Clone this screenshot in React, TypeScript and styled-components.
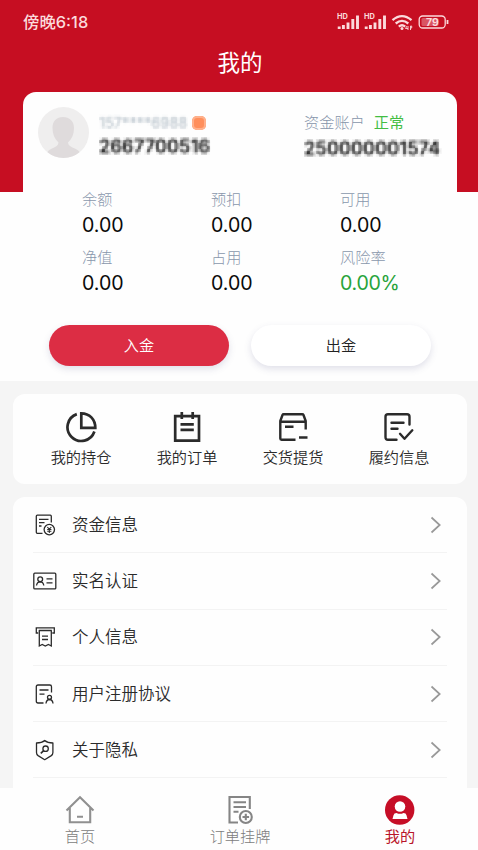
import React from 'react';
import styled, { createGlobalStyle, css } from 'styled-components';

const GlobalStyle = createGlobalStyle`
  * { box-sizing: border-box; }
  body {
    margin: 0;
    background: #fff;
    font-family: Inter, 'Noto Sans CJK SC', sans-serif;
    color: #333;
    overflow: hidden;
  }
`;

const Page = styled.div`
  width: 478px;
  height: 850px;
  display: flex;
  flex-direction: column;
  overflow: hidden;
  background: #f5f5f5;
`;

const Top = styled.section`
  height: 381px;
  flex: none;
  background: linear-gradient(#c60e22 192px, #fefefe 192px);
`;

const StatusBar = styled.div`
  height: 44px;
  padding: 0 28px 0 23px;
  display: flex;
  align-items: center;
  justify-content: space-between;
  color: #fbdadc;
`;

const Clock = styled.span`
  font-size: 16.4px;
  font-weight: 500;
  line-height: 20px;
`;

const Title = styled.h1`
  margin: 0;
  height: 48px;
  padding: 7px 0 0 2px;
  font-size: 22.5px;
  line-height: 24px;
  font-weight: 400;
  text-align: center;
  color: #fff;
`;

const Account = styled.div`
  margin: 0 21px 0 23px;
  height: 289px;
  border-radius: 13px 13px 0 0;
  background: #fefefe;
  display: flex;
  flex-direction: column;
`;

const Profile = styled.div`
  height: 98px;
  padding: 15px 10px 0 15px;
  display: flex;
`;

const Identity = styled.div`
  margin: 5px 0 0 10px;
  width: 205px;
`;

const Funds = styled.div`
  margin: 5px 0 0;
`;

const Line = styled.div<{ $gap?: number }>`
  height: ${p => (p.$gap ? 24 : 22)}px;
  padding-bottom: ${p => (p.$gap ? 3 : 1)}px;
  line-height: 20px;
  font-size: 15.2px;
  font-weight: 300;
  color: #8795aa;
  display: flex;
  align-items: center;
  gap: ${p => p.$gap ?? 6}px;
`;

const Status = styled.span`
  font-weight: 400;
  color: #43bd43;
`;

const Masked = styled.span<{ $faint?: boolean; $width: number }>`
  display: block;
  width: ${p => p.$width}px;
  white-space: nowrap;
  line-height: 24px;
  filter: url(#mosaic);
  ${p => p.$faint
    ? css`font-size: 14.6px; font-weight: 400; color: #b4bfc8;`
    : css`font-size: 18.3px; font-weight: 600; color: #222;`}
`;

const Dot = styled.i`
  width: 14px;
  height: 14px;
  border-radius: 5px;
  background: #ff8f5c;
  box-shadow: inset 0 0 0 2px #ffb18c;
`;

const Balances = styled.div`
  display: grid;
  grid-template-columns: repeat(3, 129px);
  grid-auto-rows: 57.5px;
  padding-left: 59px;
`;

const BalanceLabel = styled.div`
  font-size: 15.2px;
  line-height: 20px;
  font-weight: 300;
  color: #8997ac;
`;

const BalanceValue = styled.div<{ $positive?: boolean }>`
  margin-top: 3px;
  font-size: 19.6px;
  line-height: 24px;
  letter-spacing: ${p => (p.$positive ? '-0.3px' : '0')};
  color: ${p => (p.$positive ? '#27a33a' : '#0a0a0a')};
`;

const Actions = styled.div`
  display: flex;
  gap: 22px;
  padding: 20px 26px 0;
`;

const Pill = styled.button<{ $primary?: boolean }>`
  width: 180px;
  height: 41px;
  padding: 0;
  border: 0;
  border-radius: 21px;
  font: 350 15.2px/40px Inter, 'Noto Sans CJK SC', sans-serif;
  color: ${p => (p.$primary ? '#fff' : '#222')};
  background: ${p => (p.$primary ? '#dc2d44' : '#fff')};
  box-shadow: 0 3px 7px rgba(75, 80, 130, 0.17);
`;

const Shortcuts = styled.nav`
  flex: none;
  margin: 13px 11px 0 13px;
  height: 90px;
  padding: 17px 15px 0;
  border-radius: 12px;
  background: #fefefe;
  display: grid;
  grid-template-columns: repeat(4, 106px);
`;

const Shortcut = styled.div`
  display: flex;
  flex-direction: column;
  align-items: center;
  gap: 5px;
  font-size: 15.2px;
  line-height: 20px;
  font-weight: 350;
  color: #2b2b2b;
`;

const Menu = styled.div`
  flex: 1;
  min-height: 0;
  overflow: hidden;
  margin: 13px 11px 0 13px;
  padding: 0 20px;
  border-radius: 12px 12px 0 0;
  background: #fefefe;
`;

const MenuRow = styled.div`
  height: 56.3px;
  border-bottom: 1px solid #f3f3f3;
  display: flex;
  align-items: center;
  gap: 15px;
  padding-right: 5px;
  font-size: 16.5px;
  line-height: 20px;
  font-weight: 350;
  color: #2b2b2b;
`;

const MenuText = styled.span`
  flex: 1;
`;

const TabBar = styled.nav`
  flex: none;
  height: 62px;
  background: #fefefe;
  display: grid;
  grid-template-columns: repeat(3, 160px);
  overflow: hidden;
`;

const Tab = styled.div<{ $active?: boolean }>`
  display: flex;
  flex-direction: column;
  align-items: center;
  gap: 2px;
  padding-top: 7px;
  font-size: 15.2px;
  line-height: 20px;
  font-weight: ${p => (p.$active ? 400 : 300)};
  color: ${p => (p.$active ? '#b9152a' : '#7c7c7c')};
`;

const Icon = styled.svg`
  display: block;
  flex: none;
  fill: none;
  stroke: currentColor;
`;

const Filters = styled.svg`
  position: absolute;
  width: 0;
  height: 0;
`;

const ChevronIcon = styled(Icon)`
  color: #999;
`;

const StatusIcons = () => (
  <Icon width="113" height="18" viewBox="0 0 113 18">
    {[0, 27].map(x => (
      <g key={x} transform={`translate(${x} 0)`}>
        <path d="M2.200 16v-2.600M6.400 16v-4M11 16V9.500M15.800 16V6M20.500 16V2.500" strokeWidth="2.900" />
        <text x="0" y="6.300" fontSize="7.400" fontWeight="700" fill="currentColor" stroke="none">HD</text>
      </g>
    ))}
    <path d="M55.500 7.200Q65 -1 74.500 7.200M58.700 10.500Q65 5.200 71.300 10.500M61.800 13.600Q65 11 68.200 13.600" strokeWidth="2.300" />
    <circle cx="65" cy="15.500" r="1.500" fill="currentColor" stroke="none" />
    <path d="M70 13l-1.500 2.500h2.500M71 13v4M73.500 17v-4h1.200v2h-1" strokeWidth=".9" />
    <rect x="82.200" y="3" width="26" height="12" rx="3.500" strokeWidth="1.300" />
    <rect x="84.500" y="5" width="17" height="8" rx="1.500" fill="currentColor" opacity=".35" stroke="none" />
    <path d="M110.500 7v4" strokeWidth="1.800" />
    <text x="95.500" y="13" textAnchor="middle" fontSize="10.500" fontWeight="700" fill="currentColor" stroke="none">79</text>
  </Icon>
);

const Avatar = () => (
  <Icon width="51" height="51" viewBox="0 0 51 51">
    <g stroke="none">
      <circle cx="25.500" cy="25.500" r="25.500" fill="#efeeee" />
      <path d="M9.500 45.300C12 40 20 41.500 20.500 35.500C16.500 32 14.500 27 14.500 21C14.500 14 18.500 10 25 10S36 14 36 21C36 27 34 32 30 35.500C30.500 41.500 39 40 41.500 45.300A25.500 25.500 0 0 1 9.500 45.300Z" fill="#dfdbdc" />
    </g>
  </Icon>
);

const PieIcon = () => (
  <Icon width="32" height="32" viewBox="0 0 32 32" strokeWidth="2.700">
    <path d="M11.800 3.100A13.800 13.800 0 1 0 29.400 20.500" />
    <path d="M16.300 2.300V16.800H30.300C30.300 8.500 24.500 2.300 16.300 2.300Z" />
  </Icon>
);

const OrderIcon = () => (
  <Icon width="32" height="32" viewBox="0 0 32 32" strokeWidth="2.700">
    <path d="M4.200 5.200H28V29.700H4.200ZM10.800 1V8M21.700 1V8M9.500 13.300H22.800M9.500 18.800H22.800" />
  </Icon>
);

const BoxIcon = () => (
  <Icon width="32" height="32" viewBox="0 0 32 32" strokeWidth="2.400" strokeLinejoin="round">
    <path d="M18.500 28.700H4.500Q3.300 28.700 3.300 27.500V10L5.500 4Q5.800 3.300 6.600 3.300H25.200Q26.200 3.300 26.500 4L28.700 10V18.500M3.300 10.700H28.700M8 15.700H16.500M22 26.500H30.500" />
  </Icon>
);

const ContractIcon = () => (
  <Icon width="32" height="32" viewBox="0 0 32 32" strokeWidth="2.400" strokeLinecap="round" strokeLinejoin="round">
    <path d="M13.500 28.700H5Q2.500 28.700 2.500 26V5.800Q2.500 3.300 5 3.300H24Q26.500 3.300 26.500 5.800V13.500M8.500 11.800H20.500M8.500 17.800H14.500M17 22.800L21.500 27.800L29.300 19.300" />
  </Icon>
);

const FundIcon = () => (
  <Icon width="24" height="24" viewBox="0 0 24 24" strokeWidth="1.300">
    <path d="M9.500 20.300H4.300Q3.300 20.300 3.300 19.300V3.200Q3.300 2.200 4.300 2.200H17.300Q18.300 2.200 18.300 3.200V9.500M6 6.400H15.500M6 9.700H11.500M6 13H8.500" />
    <circle cx="16.300" cy="16.600" r="5.200" />
    <path d="M14.300 14L16.300 16.200L18.300 14M14.200 16.500H18.400M14.200 18.200H18.400M16.300 16V20" strokeWidth="1.100" />
  </Icon>
);

const IdIcon = () => (
  <Icon width="24" height="24" viewBox="0 0 24 24" strokeWidth="1.300">
    <rect x=".8" y="4.200" width="22" height="15.700" rx="1" />
    <circle cx="7.200" cy="10.300" r="2.400" />
    <path d="M3.500 16.500Q4 13 7.200 12.900Q10.300 13 10.800 16.500M13.500 9.900H19.500M13.500 13.800H19.500" />
  </Icon>
);

const PersonalIcon = () => (
  <Icon width="24" height="24" viewBox="0 0 24 24" strokeWidth="1.300">
    <path d="M5.300 8H3.300V2.800H21.300V8H19.300M5.800 5.500H18.800" />
    <path d="M6.300 5.500V21L9.200 19.500L12.300 21L15.400 19.500L18.300 21V5.500M9 11.200H15M9 14.500H15" />
  </Icon>
);

const AgreementIcon = () => (
  <Icon width="24" height="24" viewBox="0 0 24 24" strokeWidth="1.300">
    <path d="M10.500 21H5Q3.300 21 3.300 19.300V4.700Q3.300 3 5 3H16.800Q18.500 3 18.500 4.700V10.500M6.500 8H15.500M6.500 12.200H11.500" />
    <circle cx="16.500" cy="15.300" r="2" />
    <path d="M13 21.500Q13.300 17.600 16.500 17.500Q19.700 17.600 20 21.500" />
  </Icon>
);

const PrivacyIcon = () => (
  <Icon width="24" height="24" viewBox="0 0 24 24" strokeWidth="1.300" strokeLinejoin="round">
    <path d="M11.700 2.500Q14.500 5 19.900 5V14.500Q19.900 16.500 18.300 17.600L11.700 21.700L5.100 17.600Q3.500 16.500 3.500 14.500V5Q8.900 5 11.700 2.500Z" />
    <circle cx="12.600" cy="10.700" r="2.700" />
    <path d="M10.700 12.600L7.800 15.400" strokeWidth="1.600" />
  </Icon>
);

const Chevron = () => (
  <ChevronIcon width="12" height="18" viewBox="0 0 12 18" strokeWidth="1.700">
    <path d="M1.500 1.500L9.700 9L1.500 16.500" />
  </ChevronIcon>
);

const HomeIcon = () => (
  <Icon width="30" height="30" viewBox="0 0 30 30" strokeWidth="2.100">
    <path d="M1.500 15.500L15 2.300L28.500 15.500M4.800 13V27.200H25.200V13M12 21.800H18" stroke="#909090" />
  </Icon>
);

const ListingIcon = () => (
  <Icon width="30" height="30" viewBox="0 0 30 30" strokeWidth="2.100">
    <g stroke="#858585">
      <path d="M13 27.500H4.500V2H24.800V14M8.500 7.300H21M8.500 12H21M8.500 16.700H13.500" />
      <circle cx="20.800" cy="22" r="6" />
      <path d="M17.500 22H24.100M20.800 18.700V25.300" />
    </g>
  </Icon>
);

const MineIcon = () => (
  <Icon width="30" height="30" viewBox="0 0 30 30">
    <g stroke="none">
      <circle cx="14.700" cy="15" r="14.700" fill="#c60e27" />
      <circle cx="15" cy="11.500" r="5.300" fill="#fff" />
      <path d="M7.500 24L8.500 20.300Q9 18 11.500 18Q15 19.700 18.500 18Q21 18 21.500 20.300L22.500 24Z" fill="#fff" />
    </g>
  </Icon>
);

/* Samples one pixel per 3px cell and grows it to fill the cell, laid over a soft copy of the digits. */
const MosaicFilter = () => (
  <Filters>
    <filter id="mosaic" x="0" y="0" width="1" height="1" colorInterpolationFilters="sRGB">
      <feGaussianBlur in="SourceGraphic" stdDeviation=".8" result="soft" />
      <feFlood x="1" y="1" width="1" height="1" floodColor="#000" result="point" />
      <feOffset in="point" x="0" y="0" width="3" height="3" dx="0" dy="0" />
      <feTile result="points" />
      <feComposite in="soft" in2="points" operator="in" />
      <feMorphology operator="dilate" radius="1" result="cells" />
      <feComposite in="cells" in2="soft" operator="arithmetic" k1="0" k2=".62" k3=".48" k4="0" />
    </filter>
  </Filters>
);

const balances = [
  ['余额', '0.00'], ['预扣', '0.00'], ['可用', '0.00'],
  ['净值', '0.00'], ['占用', '0.00'], ['风险率', '0.00%'],
];

const shortcuts = [
  { label: '我的持仓', Glyph: PieIcon },
  { label: '我的订单', Glyph: OrderIcon },
  { label: '交货提货', Glyph: BoxIcon },
  { label: '履约信息', Glyph: ContractIcon },
];

const menu = [
  { label: '资金信息', Glyph: FundIcon },
  { label: '实名认证', Glyph: IdIcon },
  { label: '个人信息', Glyph: PersonalIcon },
  { label: '用户注册协议', Glyph: AgreementIcon },
  { label: '关于隐私', Glyph: PrivacyIcon },
];

export default function App() {
  return (
    <Page>
      <GlobalStyle />
      <MosaicFilter />
      <Top>
        <StatusBar>
          <Clock>傍晚6:18</Clock>
          <StatusIcons />
        </StatusBar>
        <Title>我的</Title>
        <Account>
          <Profile>
            <Avatar />
            <Identity>
              <Line>
                <Masked $faint $width={87}>157****6988</Masked>
                <Dot />
              </Line>
              <Masked $width={114}>2667700516</Masked>
            </Identity>
            <Funds>
              <Line $gap={9}>资金账户<Status>正常</Status></Line>
              <Masked $width={142}>250000001574</Masked>
            </Funds>
          </Profile>
          <Balances>
            {balances.map(([label, value]) => (
              <div key={label}>
                <BalanceLabel>{label}</BalanceLabel>
                <BalanceValue $positive={value.endsWith('%')}>{value}</BalanceValue>
              </div>
            ))}
          </Balances>
          <Actions>
            <Pill $primary>入金</Pill>
            <Pill>出金</Pill>
          </Actions>
        </Account>
      </Top>
      <Shortcuts>
        {shortcuts.map(({ label, Glyph }) => (
          <Shortcut key={label}><Glyph />{label}</Shortcut>
        ))}
      </Shortcuts>
      <Menu>
        {menu.map(({ label, Glyph }) => (
          <MenuRow key={label}><Glyph /><MenuText>{label}</MenuText><Chevron /></MenuRow>
        ))}
      </Menu>
      <TabBar>
        <Tab><HomeIcon />首页</Tab>
        <Tab><ListingIcon />订单挂牌</Tab>
        <Tab $active><MineIcon />我的</Tab>
      </TabBar>
    </Page>
  );
}
